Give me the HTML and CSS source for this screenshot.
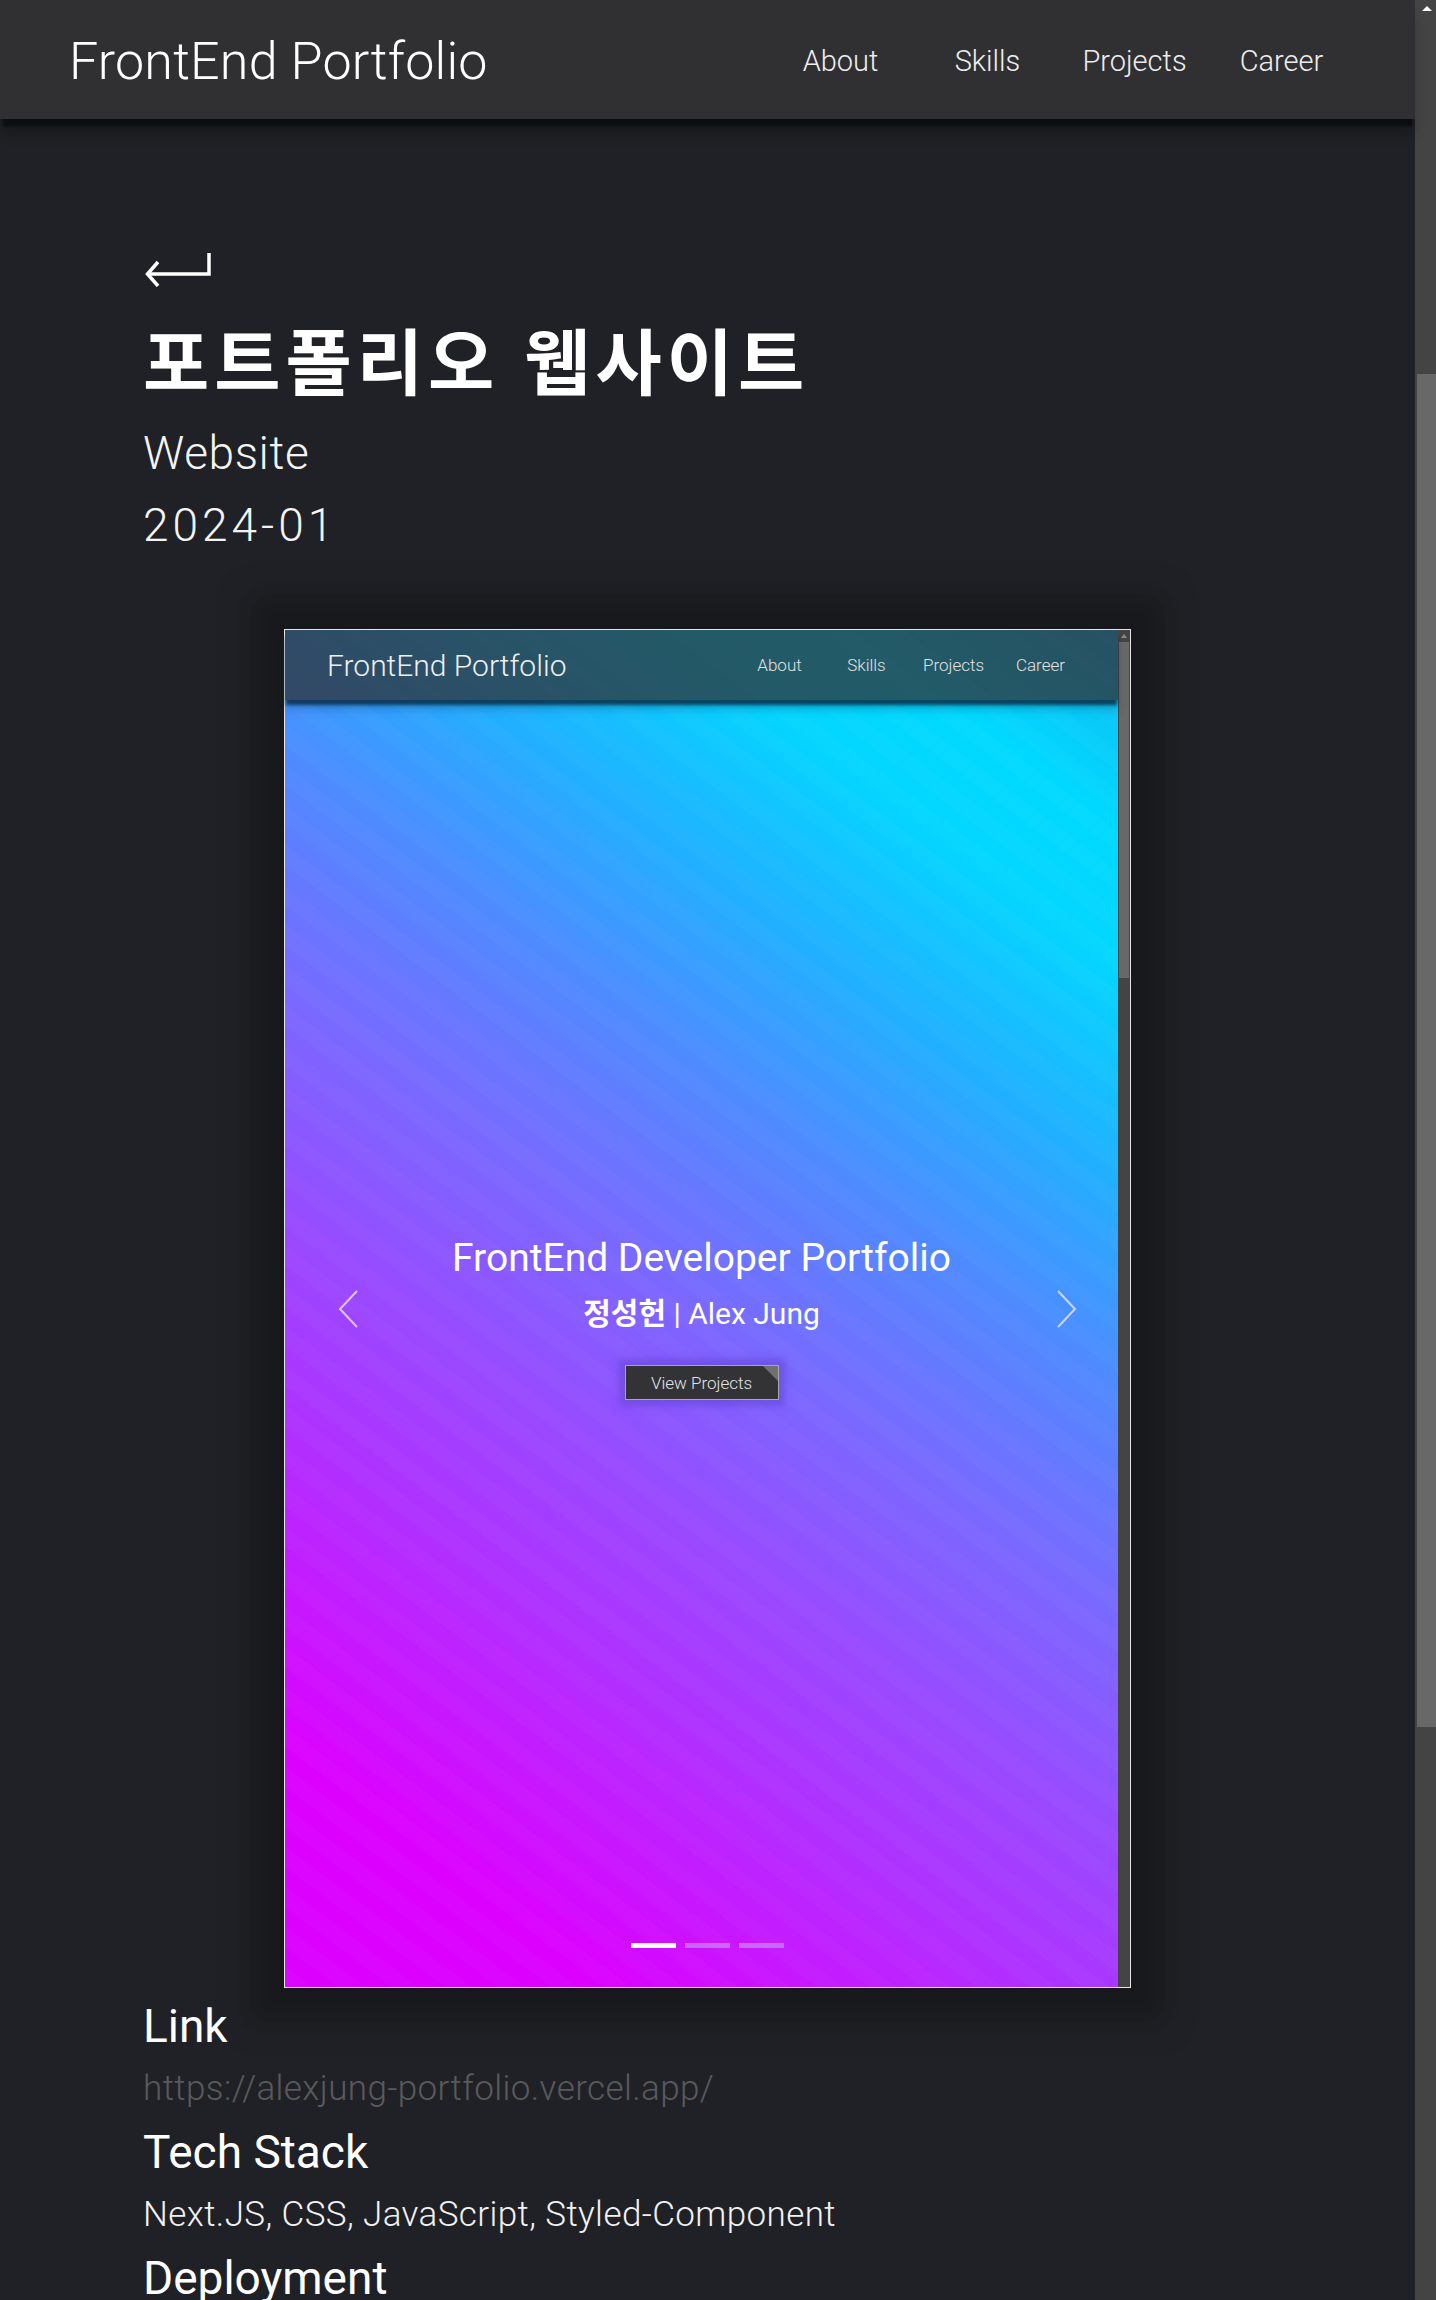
FILE: index.html
```html
<!DOCTYPE html>
<html lang="ko">
<head>
<meta charset="utf-8">
<title>포트폴리오 웹사이트 | FrontEnd Portfolio</title>
<link rel="stylesheet" href="styles.css">
</head>
<body>
<div class="window">
  <div class="page">
    <header class="site-header">
      <a class="logo">FrontEnd Portfolio</a>
      <nav class="site-nav">
        <a>About</a><a>Skills</a><a>Projects</a><a>Career</a>
      </nav>
    </header>

    <main class="project">
      <div class="project-head">
        <a class="back" aria-label="뒤로 가기">
          <svg width="66" height="34" viewBox="0 0 66 34" fill="none" stroke="#fff" stroke-width="3.5">
            <path d="M13 9 L2.5 21 L13 33"/>
            <path d="M2.5 21 H64 V0"/>
          </svg>
        </a>
        <h1 class="project-title">포트폴리오 웹사이트</h1>
        <p class="project-meta">Website</p>
        <p class="project-meta date">2024-01</p>
      </div>

      <div class="preview-wrap">
        <div class="preview">
          <div class="screen">
            <div class="mini-header">
              <span class="mini-logo">FrontEnd Portfolio</span>
              <nav class="mini-nav">
                <span>About</span><span>Skills</span><span>Projects</span><span>Career</span>
              </nav>
            </div>
            <div class="hero">
              <svg class="chev chev-left" width="20" height="38" viewBox="0 0 20 38" fill="none" stroke="rgba(235,230,255,0.8)" stroke-width="2">
                <path d="M19 1 L2 19 L19 37"/>
              </svg>
              <svg class="chev chev-right" width="20" height="38" viewBox="0 0 20 38" fill="none" stroke="rgba(235,230,255,0.8)" stroke-width="2">
                <path d="M1 1 L18 19 L1 37"/>
              </svg>
              <p class="hero-title">FrontEnd Developer Portfolio</p>
              <p class="hero-name"><span class="ko">정성헌</span> | Alex Jung</p>
              <a class="hero-btn">View Projects</a>
              <div class="dots">
                <span class="dot active"></span><span class="dot"></span><span class="dot"></span>
              </div>
            </div>
          </div>
          <div class="mini-scrollbar">
            <span class="mini-arrow"></span>
            <span class="mini-thumb"></span>
          </div>
        </div>
      </div>

      <section class="details">
        <h2>Link</h2>
        <a class="link">https://alexjung-portfolio.vercel.app/</a>
        <h2>Tech Stack</h2>
        <p>Next.JS, CSS, JavaScript, Styled-Component</p>
        <h2>Deployment</h2>
        <p>Vercel</p>
      </section>
    </main>
  </div>

  <div class="scrollbar">
    <span class="sb-button"><span class="sb-arrow"></span></span>
    <span class="sb-thumb"></span>
  </div>
</div>
</body>
</html>
```

FILE: styles.css
```css
* {
  box-sizing: border-box;
  margin: 0;
  padding: 0;
}

html,
body {
  height: 2300px;
  overflow: hidden;
  background: #202126;
}

body {
  font-family: Roboto, "Noto Sans CJK KR", sans-serif;
  color: #fff;
}

a {
  color: inherit;
  text-decoration: none;
}

.window {
  display: flex;
  height: 2300px;
}

.page {
  flex: 1;
  min-width: 0;
}

/* ---------- page scrollbar ---------- */
.scrollbar {
  width: 21px;
  background: #444444;
  display: flex;
  flex-direction: column;
}

.sb-button {
  height: 17px;
  display: flex;
  align-items: center;
  justify-content: center;
  padding-left: 2px;
}

.sb-arrow {
  width: 0;
  height: 0;
  border-left: 5px solid transparent;
  border-right: 5px solid transparent;
  border-bottom: 5px solid #ffffff;
}

.sb-thumb {
  align-self: flex-end;
  width: 19px;
  height: 1353px;
  margin-top: 357px;
  background: #686868;
}

/* ---------- site header ---------- */
.site-header {
  position: relative;
  z-index: 2;
  height: 119px;
  background: #303032;
  display: flex;
  align-items: center;
  justify-content: space-between;
  padding: 0 60px 0 69px;
  box-shadow: 0 10px 2px -3px #0c0d0f, 0 16px 10px rgba(0, 0, 0, 0.22);
}

.logo {
  font-size: 52px;
  font-weight: 300;
  color: #ffffff;
  padding-top: 4px;
  letter-spacing: 0.2px;
}

.site-nav {
  display: flex;
}

.site-nav a {
  width: 147px;
  text-align: center;
  font-size: 29px;
  font-weight: 300;
  color: #eeeeee;
  padding-top: 2px;
}

/* ---------- project head ---------- */
.project-head {
  padding: 134px 0 0 143px;
}

.back {
  display: block;
  width: 66px;
  height: 34px;
  margin: 0 0 28px 2px;
}

.back svg {
  display: block;
}

.project-title {
  font-family: "Noto Sans CJK KR", sans-serif;
  font-size: 72px;
  font-weight: 700;
  line-height: 86px;
  letter-spacing: 5px;
  margin-bottom: 16px;
}

.project-meta {
  font-size: 46px;
  font-weight: 300;
  line-height: 72px;
  letter-spacing: 0.6px;
  color: #f4f4f4;
}

.date {
  letter-spacing: 4px;
}

/* ---------- preview ---------- */
.preview-wrap {
  display: flex;
  justify-content: center;
  margin-top: 68px;
}

.preview {
  width: 847px;
  height: 1359px;
  border: 1px solid #e6e6e6;
  display: flex;
  box-shadow: 0 0 18px 26px rgba(0, 0, 0, 0.17), 0 0 28px 44px rgba(0, 0, 0, 0.09);
}

.screen {
  flex: 1;
  display: flex;
  flex-direction: column;
  background:
    repeating-linear-gradient(37deg, rgba(255, 255, 255, 0.02) 0 16px, rgba(255, 255, 255, 0) 16px 32px),
    linear-gradient(37deg,
      #dc00ff 0%, #dc00ff 12%, #b42cff 27%, #9a48ff 38%, #7a68ff 50%,
      #4f8aff 62%, #22afff 72%, #04d6ff 83%, #00d9ff 90%, #12b8f2 100%);
}

.mini-scrollbar {
  width: 12px;
  background: #444444;
  display: flex;
  flex-direction: column;
}

.mini-arrow {
  height: 12px;
  display: flex;
  justify-content: center;
  align-items: center;
}

.mini-arrow::before {
  content: "";
  width: 0;
  height: 0;
  border-left: 3px solid transparent;
  border-right: 3px solid transparent;
  border-bottom: 4px solid #8a8a8a;
}

.mini-thumb {
  height: 336px;
  margin: 0 1px;
  background: #686868;
}

.mini-header {
  position: relative;
  z-index: 1;
  height: 70px;
  flex-shrink: 0;
  display: flex;
  align-items: center;
  justify-content: space-between;
  padding: 0 34px 0 42px;
  background: rgba(46, 46, 50, 0.74);
  box-shadow: 0 6px 3px -1px rgba(10, 35, 55, 0.75), 0 10px 8px rgba(10, 60, 100, 0.25);
}

.mini-logo {
  font-size: 30px;
  font-weight: 300;
  color: #f0f0f0;
}

.mini-nav {
  display: flex;
}

.mini-nav span {
  width: 87px;
  text-align: center;
  font-size: 17px;
  font-weight: 300;
  color: #e2e2e2;
}

.hero {
  position: relative;
  flex: 1;
  display: flex;
  flex-direction: column;
  align-items: center;
  padding-top: 535px;
}

.chev {
  position: absolute;
  top: 590px;
}

.chev-left {
  left: 53px;
}

.chev-right {
  right: 41px;
}

.hero-title {
  font-size: 39px;
  font-weight: 400;
  line-height: 47px;
  color: #ffffff;
}

.hero-name {
  font-size: 30px;
  font-weight: 400;
  line-height: 42px;
  margin-top: 8px;
  color: #ffffff;
}

.hero-name .ko {
  font-family: "Noto Sans CJK KR", sans-serif;
  font-weight: 700;
}

.hero-btn {
  position: relative;
  overflow: hidden;
  margin-top: 30px;
  width: 154px;
  height: 35px;
  display: flex;
  align-items: center;
  justify-content: center;
  font-size: 17px;
  font-weight: 300;
  color: #e4e4e4;
  background: #333336;
  border: 1px solid #a8a8a8;
  box-shadow: 0 0 7px 6px rgba(100, 70, 210, 0.6);
}

.hero-btn::after {
  content: "";
  position: absolute;
  top: 0;
  right: 0;
  border-top: 15px solid #707070;
  border-left: 15px solid transparent;
}

.dots {
  display: flex;
  gap: 9px;
  margin-top: auto;
  margin-bottom: 39px;
  margin-left: 12px;
}

.dot {
  width: 45px;
  height: 5px;
  background: rgba(200, 170, 255, 0.55);
}

.dot.active {
  background: #ffffff;
}

/* ---------- details ---------- */
.details {
  padding-left: 143px;
  margin-top: 7px;
}

.details h2 {
  font-size: 46px;
  font-weight: 400;
  line-height: 62px;
  color: #ffffff;
}

.details p,
.details .link {
  display: block;
  font-size: 35px;
  font-weight: 300;
  line-height: 64px;
  letter-spacing: 0.4px;
  color: #f2f2f2;
}

.details .link {
  color: #5a5a5c;
}
```
